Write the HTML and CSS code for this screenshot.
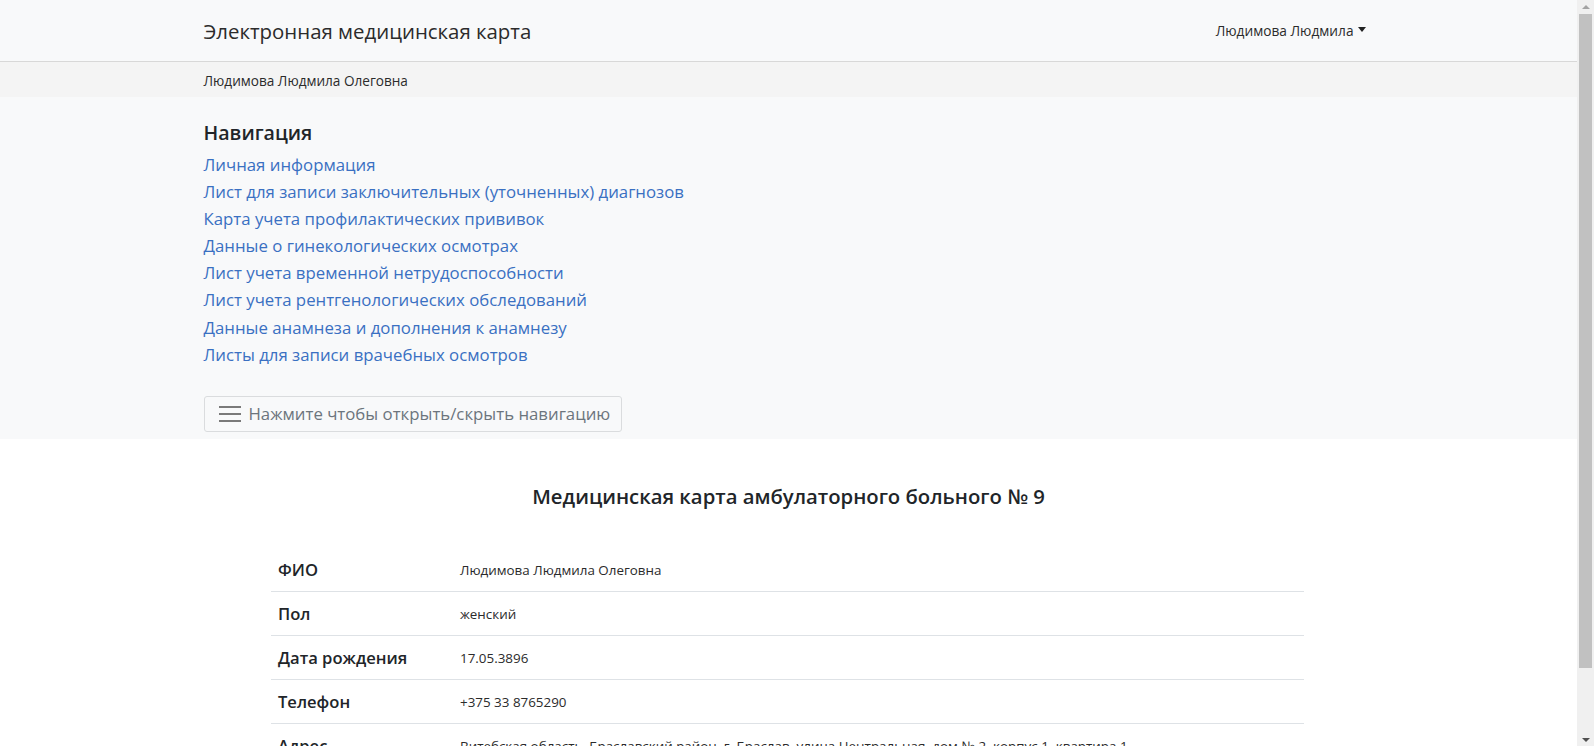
FILE: index.html
```html
<!DOCTYPE html>
<html lang="ru">
<head>
<meta charset="utf-8">
<title>Электронная медицинская карта</title>
<link rel="stylesheet" href="styles.css">
</head>
<body>
<div class="viewport">
  <div class="page">
    <header class="navbar">
      <div class="container navbar-inner">
        <a class="brand" href="#">Электронная медицинская карта</a>
        <a class="user-toggle" href="#">Людимова Людмила<span class="caret"></span></a>
      </div>
    </header>
    <div class="subbar">
      <div class="container">Людимова Людмила Олеговна</div>
    </div>
    <section class="nav-section">
      <div class="container">
        <h2 class="nav-title">Навигация</h2>
        <ul class="nav-list">
          <li><a href="#">Личная информация</a></li>
          <li><a href="#">Лист для записи заключительных (уточненных) диагнозов</a></li>
          <li><a href="#">Карта учета профилактических прививок</a></li>
          <li><a href="#">Данные о гинекологических осмотрах</a></li>
          <li><a href="#">Лист учета временной нетрудоспособности</a></li>
          <li><a href="#">Лист учета рентгенологических обследований</a></li>
          <li><a href="#">Данные анамнеза и дополнения к анамнезу</a></li>
          <li><a href="#">Листы для записи врачебных осмотров</a></li>
        </ul>
        <button class="toggle-btn" type="button">
          <svg class="burger" width="22" height="18" viewBox="0 0 22 18"><path d="M0 2h22M0 9h22M0 16h22" stroke="#7a7a7a" stroke-width="2"/></svg>
          <span>Нажмите чтобы открыть/скрыть навигацию</span>
        </button>
      </div>
    </section>
    <main class="content">
      <h1 class="card-title">Медицинская карта амбулаторного больного № 9</h1>
      <table class="info-table">
        <tr><th>ФИО</th><td>Людимова Людмила Олеговна</td></tr>
        <tr><th>Пол</th><td>женский</td></tr>
        <tr><th>Дата рождения</th><td>17.05.3896</td></tr>
        <tr><th>Телефон</th><td>+375 33 8765290</td></tr>
        <tr><th>Адрес</th><td>Витебская область, Браславский район, г. Браслав, улица Центральная, дом № 2, корпус 1, квартира 1</td></tr>
        <tr><th>Место работы</th><td>—</td></tr>
      </table>
    </main>
  </div>
  <div class="scrollbar">
    <div class="sb-arrow sb-up"></div>
    <div class="sb-track"><div class="sb-thumb"></div></div>
    <div class="sb-arrow sb-down"></div>
  </div>
</div>
</body>
</html>
```
FILE: styles.css
```css
* { box-sizing: border-box; }
html, body { margin: 0; padding: 0; height: 100%; overflow: hidden; }
body {
  font-family: "Open Sans", "Noto Sans", sans-serif;
  color: #212529;
  background: #fff;
}
a { text-decoration: none; }

.viewport { display: flex; height: 100vh; }
.page { flex: 1; min-width: 0; overflow: hidden; }

.container {
  width: 1200px;
  margin: 0 auto;
  padding: 0 15px;
}

.navbar {
  background: #f8f9fa;
  border-bottom: 1px solid #d8d8d8;
  height: 62px;
}
.navbar-inner {
  display: flex;
  align-items: center;
  justify-content: space-between;
  height: 61px;
}
.brand {
  font-size: 20.4px;
  color: #2b2b2b;
}
.user-toggle {
  font-size: 13.7px;
  color: #2b2b2b;
  margin-right: 8px;
  display: flex;
  align-items: center;
}
.caret {
  display: inline-block;
  width: 0; height: 0;
  border-left: 4.5px solid transparent;
  border-right: 4.5px solid transparent;
  border-top: 5px solid #222;
  margin-left: 4px;
  margin-top: -2px;
}

.subbar {
  background: #f4f4f4;
  height: 35px;
  display: flex;
  align-items: center;
  font-size: 13.6px;
  color: #2b2b2b;
}
.subbar .container { padding-top: 2px; }

.nav-section {
  background: #f8f9fa;
  padding: 20px 0 7px;
}
.nav-title {
  margin: 0 0 2px;
  font-size: 19.6px;
  font-weight: 600;
  line-height: 32px;
}
.nav-list {
  list-style: none;
  margin: 0 0 28px;
  padding: 0;
}
.nav-list li {
  font-size: 16.8px;
  line-height: 27.1px;
}
.nav-list a { color: #3a70c2; }
.toggle-btn {
  display: flex;
  align-items: center;
  gap: 8px;
  height: 36px;
  padding: 0 11px 0 14px;
  background: #f8f9fa;
  border: 1px solid #dadcde;
  border-radius: 3px;
  font-family: inherit;
  font-size: 16.8px;
  color: #6c757d;
}
.burger { display: block; }

.content { padding: 41px 0 0; }
.card-title {
  text-align: center;
  margin: 0 0 36px;
  font-size: 20.3px;
  font-weight: 600;
  line-height: 32px;
  color: #212529;
}
.info-table {
  width: 1033px;
  margin: 0 auto;
  border-collapse: collapse;
  position: relative;
  left: -1px;
}
.info-table th, .info-table td {
  text-align: left;
  vertical-align: middle;
  height: 44px;
  padding: 0 7px;
  border-top: 1px solid #dee2e6;
}
.info-table tr:first-child th, .info-table tr:first-child td { border-top: 0; }
.info-table th {
  width: 182px;
  font-size: 16.6px;
  font-weight: 600;
}
.info-table td {
  font-size: 13.4px;
  color: #2b2b2b;
}

.scrollbar {
  width: 17px;
  flex: none;
  background: #f0f0f0;
  display: flex;
  flex-direction: column;
}
.sb-arrow { height: 13px; display: flex; justify-content: center; align-items: center; }
.sb-up::before {
  content: ""; border-left: 4px solid transparent; border-right: 4px solid transparent;
  border-bottom: 4px solid #a3a3a3;
}
.sb-down::before {
  content: ""; border-left: 4px solid transparent; border-right: 4px solid transparent;
  border-top: 4px solid #505050;
}
.sb-track { flex: 1; padding: 1px 2px; }
.sb-thumb { height: 654px; background: #c1c1c1; }
```
